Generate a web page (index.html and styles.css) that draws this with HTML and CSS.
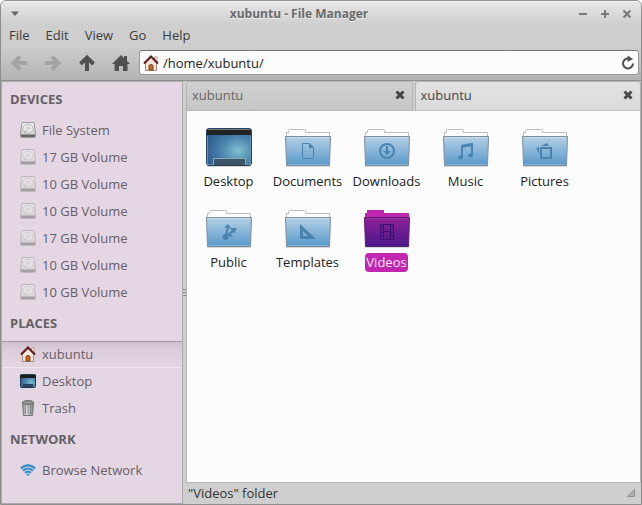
FILE: index.html
```html
<!DOCTYPE html>
<html lang="en">
<head>
    <meta charset="UTF-8">
    <meta name="viewport" content="width=device-width, initial-scale=1.0">
    <title>xubuntu - File Manager</title>
    <link rel="stylesheet" href="styles.css">
</head>
<body>
    <svg class="sprite" width="0" height="0" aria-hidden="true">
        <defs>
            <linearGradient id="blue" x1="0" y1="0" x2="0" y2="1">
                <stop offset="0" stop-color="#b3cfe5"/>
                <stop offset="0.5" stop-color="#87b5d9"/>
                <stop offset="1" stop-color="#5a99c8"/>
            </linearGradient>
            <linearGradient id="purple" x1="0" y1="0" x2="0" y2="1">
                <stop offset="0" stop-color="#90219b"/>
                <stop offset="1" stop-color="#4a1889"/>
            </linearGradient>
            <radialGradient id="screen" cx="0.7" cy="0.6" r="0.75">
                <stop offset="0" stop-color="#7fc0cf"/>
                <stop offset="0.5" stop-color="#4a82ad"/>
                <stop offset="1" stop-color="#2d5a91"/>
            </radialGradient>
            <linearGradient id="metal" x1="0" y1="0" x2="0" y2="1">
                <stop offset="0" stop-color="#f4f4f4"/>
                <stop offset="1" stop-color="#c4c4c4"/>
            </linearGradient>
            <linearGradient id="can" x1="0" y1="0" x2="1" y2="0">
                <stop offset="0" stop-color="#85888a"/>
                <stop offset="0.4" stop-color="#e4e4e4"/>
                <stop offset="1" stop-color="#76797b"/>
            </linearGradient>
        </defs>
        <symbol id="folder" viewBox="0 0 48 40">
            <rect x="2" y="37" width="44" height="2" rx="1" fill="#000" opacity="0.15"/>
            <path d="M2.5 10.500V4.500H4.500V2.500Q4.500 1.500 5.500 1.500H20.500Q21.500 1.500 21.500 2.500V4.500H45.500V10.500Z" fill="#fcfcfc" stroke="#bcbcbc"/>
            <path d="M1.500 8.500H46.500L45.500 37.500H2.500Z" fill="url(#blue)" stroke="#7c8e9c"/>
            <path d="M3 9.500H45" stroke="#c8dfef"/>
            <path d="M3.500 36.500H44.500" stroke="#7fb2d8"/>
        </symbol>
        <symbol id="folder-selected" viewBox="0 0 48 40">
            <rect x="2" y="37" width="44" height="2" rx="1" fill="#000" opacity="0.15"/>
            <path d="M2.500 10.500V4.500H4.500V1.500H20.500V4.500H45.500V10.500Z" fill="#c127ae" stroke="#b423a5"/>
            <path d="M1.500 8.500H46.500L45.500 37.500H2.500Z" fill="url(#purple)" stroke="#5d1b74"/>
            <path d="M3 9.500H45" stroke="#9a2fa8"/>
        </symbol>
        <symbol id="drive" viewBox="0 0 16 16">
            <path d="M2 .5H14L15.500 11V14.500Q15.500 15.500 14.500 15.500H1.500Q.5 15.500 .5 14.500V11Z" fill="url(#metal)" stroke="#9a9a9a"/>
            <path d="M1 12.500H15V14.500Q15 15 14 15H2Q1 15 1 14.500Z" fill="#666"/>
            <ellipse cx="8" cy="6.500" rx="5" ry="4.500" fill="#e8e8e8" stroke="#bdbdbd"/>
            <circle cx="8" cy="6" r="1" fill="#fff" stroke="#bbb"/>
            <path d="M4 11L7 8" stroke="#aaa"/>
        </symbol>
        <symbol id="house" viewBox="0 0 16 16">
            <path d="M11.500 2H14V7H11.500Z" fill="#f7efe6" stroke="#b79a83"/>
            <path d="M2.500 8L8 2.500L13.500 8V15.500H2.500Z" fill="#f6e7dc" stroke="#a08a7b"/>
            <path d="M6 15V11Q6 9.500 8 9.500Q10 9.500 10 11V15Z" fill="#c66a28" stroke="#84401b"/>
            <path d="M1 8.500L8 1.500L15 8.500" fill="none" stroke="#5c1c20" stroke-width="2"/>
        </symbol>
        <symbol id="desktop" viewBox="0 0 48 40">
            <rect x="2" y="36" width="44" height="3" rx="1" fill="#000" opacity="0.15"/>
            <rect x="1.500" y=".5" width="45" height="37" rx="2.500" fill="url(#screen)" stroke="#26435f"/>
            <path d="M2 7V3Q2 1 4 1H44Q46 1 46 3V7Z" fill="#222"/>
            <path d="M3 1.500H45" stroke="#777"/>
            <path d="M2.500 8V36.500H8M40 36.500H45.500V8" fill="none" stroke="#6590b7"/>
            <rect x="8.500" y="30.500" width="32" height="7" fill="#3c5468" stroke="#85a8bd"/>
            <path d="M4 37.500H44" stroke="#263a4c"/>
        </symbol>
        <symbol id="cross" viewBox="0 0 10 10">
            <path d="M1.500 1.500L8.500 8.500M8.500 1.500L1.500 8.500" stroke="#484848" stroke-width="3"/>
        </symbol>
    </svg>

    <div class="window">
        <header class="titlebar">
            <button class="wm" aria-label="Window menu"><svg width="10" height="6"><path d="M1 .5H9L5 5Z" fill="#666"/></svg></button>
            <h1>xubuntu - File Manager</h1>
            <div class="wm-buttons">
                <button class="wm" aria-label="Minimize"><svg width="10" height="10"><path d="M1 5H9" stroke="#777" stroke-width="2"/></svg></button>
                <button class="wm" aria-label="Maximize"><svg width="10" height="10"><path d="M1 5H9M5 1V9" stroke="#777" stroke-width="2"/></svg></button>
                <button class="wm" aria-label="Close"><svg width="10" height="10"><path d="M1.500 1.500L8.500 8.500M8.500 1.500L1.500 8.500" stroke="#777" stroke-width="2"/></svg></button>
            </div>
        </header>

        <nav class="menubar">
            <button>File</button>
            <button>Edit</button>
            <button>View</button>
            <button>Go</button>
            <button>Help</button>
        </nav>

        <div class="toolbar">
            <button class="tool" aria-label="Back" disabled><svg width="18" height="18"><path d="M17 9H4M10 2.500L3.500 9L10 15.500" fill="none" stroke="#a3a3a3" stroke-width="4"/></svg></button>
            <button class="tool" aria-label="Forward" disabled><svg width="18" height="18"><path d="M1 9H14M8 2.500L14.500 9L8 15.500" fill="none" stroke="#a3a3a3" stroke-width="4"/></svg></button>
            <button class="tool" aria-label="Up"><svg width="18" height="18"><path d="M9 17V4M2.500 10L9 3.500L15.500 10" fill="none" stroke="#505050" stroke-width="4"/></svg></button>
            <button class="tool" aria-label="Home"><svg width="18" height="18"><path d="M9 1L12 4V2H15V7L18 10H15.500V17H11V12H7V17H2.500V10H0Z" fill="#505050"/></svg></button>
            <div class="location">
                <svg width="16" height="16"><use href="#house"/></svg>
                <input type="text" value="/home/xubuntu/" aria-label="Location">
                <button aria-label="Reload"><svg width="14" height="16"><path d="M8 3.500A5 5 0 1 0 12 8.500" fill="none" stroke="#505050" stroke-width="2"/><path d="M6.500 .5L12 4L6.500 7Z" fill="#505050"/></svg></button>
            </div>
        </div>

        <div class="main">
            <aside class="sidebar">
                <h2>DEVICES</h2>
                <a href="#"><svg width="16" height="16"><use href="#drive"/></svg>File System</a>
                <a href="#" class="unmounted"><svg width="16" height="16"><use href="#drive"/></svg>17 GB Volume</a>
                <a href="#" class="unmounted"><svg width="16" height="16"><use href="#drive"/></svg>10 GB Volume</a>
                <a href="#" class="unmounted"><svg width="16" height="16"><use href="#drive"/></svg>10 GB Volume</a>
                <a href="#" class="unmounted"><svg width="16" height="16"><use href="#drive"/></svg>17 GB Volume</a>
                <a href="#" class="unmounted"><svg width="16" height="16"><use href="#drive"/></svg>10 GB Volume</a>
                <a href="#" class="unmounted"><svg width="16" height="16"><use href="#drive"/></svg>10 GB Volume</a>
                <h2>PLACES</h2>
                <a href="#" class="current"><svg width="16" height="16"><use href="#house"/></svg>xubuntu</a>
                <a href="#"><svg width="16" height="16">
                    <rect x=".5" y="1.500" width="15" height="13" rx="1" fill="url(#screen)" stroke="#22394f"/>
                    <path d="M0 2H16V5H0Z" fill="#1c1c1c"/>
                    <path d="M3 11H13V14H3Z" fill="#29455e"/>
                </svg>Desktop</a>
                <a href="#"><svg width="16" height="16">
                    <path d="M2.500 2.500H13.500L12.500 15.500H3.500Z" fill="url(#can)" stroke="#777"/>
                    <path d="M5.500 5V14M8 5V14M10.500 5V14" stroke="#8a8a8a"/>
                    <ellipse cx="8" cy="2.500" rx="5.500" ry="2" fill="#8f9294" stroke="#6f6f6f"/>
                </svg>Trash</a>
                <h2>NETWORK</h2>
                <a href="#"><svg width="16" height="16">
                    <path d="M0 5.500Q8 -1.500 16 5.500L8 14Z" fill="#3c8ac8"/>
                    <path d="M2 7.500Q8 2.500 14 7.500M4 10Q8 6 12 10M6 12Q8 10 10 12" fill="none" stroke="#c9dbea"/>
                </svg>Browse Network</a>
            </aside>

            <div class="splitter"><i></i><i></i><i></i></div>

            <div class="content">
                <div class="tabs">
                    <div class="tab">
                        <button class="tab-label">xubuntu</button>
                        <button aria-label="Close tab"><svg width="10" height="10"><use href="#cross"/></svg></button>
                    </div>
                    <div class="tab active">
                        <button class="tab-label">xubuntu</button>
                        <button aria-label="Close tab"><svg width="10" height="10"><use href="#cross"/></svg></button>
                    </div>
                </div>

                <div class="files">
                    <a href="#"><svg width="48" height="40"><use href="#desktop"/></svg><span>Desktop</span></a>
                    <a href="#"><svg width="48" height="40"><use href="#folder"/>
                        <path d="M18.500 15.500H25.500L29.500 19.500V30.500H18.500Z" fill="none" stroke="#4a83ad"/>
                        <path d="M25 15V20H30Z" fill="#4a83ad"/>
                    </svg><span>Documents</span></a>
                    <a href="#"><svg width="48" height="40"><use href="#folder"/>
                        <circle cx="24" cy="23" r="7" fill="none" stroke="#4a83ad" stroke-width="2"/>
                        <path d="M23 18H25V23H28L24 27L20 23H23Z" fill="#4a83ad"/>
                    </svg><span>Downloads</span></a>
                    <a href="#"><svg width="48" height="40"><use href="#folder"/>
                        <path d="M20 29V18L30 16V27" fill="none" stroke="#4a83ad" stroke-width="2"/>
                        <path d="M19 17L31 15V18L19 20Z" fill="#4a83ad"/>
                        <ellipse cx="18.500" cy="29.500" rx="2.500" ry="2" fill="#4a83ad"/>
                        <ellipse cx="28.500" cy="27.500" rx="2.500" ry="2" fill="#4a83ad"/>
                    </svg><span>Music</span></a>
                    <a href="#"><svg width="48" height="40"><use href="#folder"/>
                        <rect x="20" y="20" width="10" height="10" fill="none" stroke="#4a83ad" stroke-width="2"/>
                        <path d="M20 18L26 15L28 18ZM15 20L18 19V26Z" fill="#4a83ad"/>
                    </svg><span>Pictures</span></a>
                    <a href="#"><svg width="48" height="40"><use href="#folder"/>
                        <circle cx="20.500" cy="28" r="3" fill="#4a83ad"/>
                        <path d="M20.500 28L23 18M20.500 28L29 21" stroke="#4a83ad" stroke-width="2"/>
                        <path d="M19 18.500L23 15L26 19ZM25 19H32L29 24.500ZM24 23L28 27L24 28Z" fill="#4a83ad"/>
                    </svg><span>Public</span></a>
                    <a href="#"><svg width="48" height="40"><use href="#folder"/>
                        <path d="M16 15V30H32ZM19 22L24 27H19Z" fill="#4a83ad" fill-rule="evenodd"/>
                    </svg><span>Templates</span></a>
                    <a href="#" class="selected"><svg width="48" height="40"><use href="#folder-selected"/>
                        <g fill="none" stroke="#3c1173">
                            <path d="M17.500 15.500H30.500V30.500H17.500ZM20.500 15.500V30.500M27.500 15.500V30.500M20.500 22.500H27.500"/>
                            <path d="M18 17.500H20M18 20.500H20M18 23.500H20M18 26.500H20M28 17.500H30M28 20.500H30M28 23.500H30M28 26.500H30"/>
                        </g>
                    </svg><span>Videos</span></a>
                </div>

                <footer class="statusbar">
                    <span>"Videos" folder</span>
                    <svg width="8" height="8"><path d="M7.500 .5V7.500H.5Z" fill="#b0b0b0" stroke="#8e8e8e"/></svg>
                </footer>
            </div>
        </div>
    </div>
</body>
</html>
```

FILE: styles.css
```css
* {
    box-sizing: border-box;
}

body {
    margin: 0;
    font-family: "Open Sans", "Noto Sans", sans-serif;
    font-size: 13px;
    line-height: 18px;
    color: #3c3c3c;
    background: #fff;
}

button {
    padding: 0;
    border: none;
    background: none;
    font: inherit;
    color: inherit;
}

svg {
    display: block;
    flex: none;
}

a {
    color: inherit;
    text-decoration: none;
}

.sprite {
    position: absolute;
}

.window {
    display: flex;
    flex-direction: column;
    min-height: 100vh;
    border: 1px solid #8e8e8e;
    border-radius: 6px 6px 0 0;
    background: #cecece;
    overflow: hidden;
}

.titlebar {
    display: flex;
    align-items: center;
    height: 24px;
    padding: 0 5px 0 9px;
    border-top: 1px solid #f4f4f4;
    background: linear-gradient(#e6e6e6, #cecece);
}

.titlebar h1 {
    flex: 1;
    margin: 0;
    font-size: 12px;
    text-align: center;
    color: #6a6a6a;
    text-shadow: 0 1px #eee;
}

.wm-buttons {
    display: flex;
    gap: 12px;
    padding-right: 4px;
}

.menubar {
    display: flex;
    gap: 16px;
    height: 20px;
    padding: 0 8px;
}

.toolbar {
    display: flex;
    align-items: center;
    gap: 16px;
    height: 36px;
    padding: 0 2px 0 9px;
    border-bottom: 1px solid #8e8e8e;
    background: linear-gradient(#cecece, #b3b3b3);
}

.location {
    flex: 1;
    display: flex;
    align-items: center;
    gap: 4px;
    height: 25px;
    margin-left: -7px;
    padding: 0 3px;
    border: 1px solid #999;
    border-top-color: #777;
    border-radius: 3px;
    background: #fcfcfc;
}

.location input {
    flex: 1;
    min-width: 0;
    padding: 0;
    border: none;
    background: none;
    font: inherit;
    color: #222;
    outline: none;
}

.main {
    flex: 1;
    display: flex;
}

.sidebar {
    flex: none;
    width: 182px;
    border: 1px solid #ababab;
    background: #e4d6e3;
    color: #676067;
}

.sidebar h2 {
    margin: 0;
    padding: 0 8px;
    font-size: 13px;
    line-height: 35px;
    color: #656065;
}

.sidebar a {
    display: flex;
    align-items: center;
    gap: 6px;
    height: 27px;
    padding-left: 18px;
    padding-bottom: 1px;
}

.sidebar .unmounted svg {
    opacity: 0.5;
}

.sidebar .current {
    border-top: 1px solid #a599a5;
    border-bottom: 1px solid #f0e6ef;
    background: linear-gradient(#cdbfcc, #dbcdda 30%, #e2d4e1);
}

.splitter {
    flex: none;
    display: flex;
    flex-direction: column;
    justify-content: center;
    gap: 2px;
    width: 3px;
}

.splitter i {
    height: 1px;
    background: #888;
}

.content {
    flex: 1;
    display: flex;
    flex-direction: column;
    min-width: 0;
}

.tabs {
    display: flex;
    gap: 2px;
    height: 30px;
}

.tab {
    flex: 1;
    display: flex;
    align-items: center;
    padding: 0 7px 2px 5px;
    border: 1px solid #b4b4b4;
    border-radius: 3px 3px 0 0;
    background: linear-gradient(#d0d0d0, #c6c6c6);
    color: #666;
}

.tab.active {
    border-bottom-color: #c4c4c4;
    background: linear-gradient(#e2e2e2, #dadada);
    color: #444;
}

.tab-label {
    flex: 1;
    text-align: left;
}

.files {
    flex: 1;
    display: grid;
    grid-template-columns: repeat(auto-fill, 79px);
    align-content: start;
    row-gap: 18px;
    padding: 17px 2px;
    border: 1px solid #b4b4b4;
    border-top: none;
    background: #fcfcfc;
    color: #222;
}

.files a {
    display: flex;
    flex-direction: column;
    align-items: center;
    gap: 4px;
}

.files span {
    padding: 0 1px;
    line-height: 19px;
    border-radius: 4px;
}

.files .selected span {
    background: #c127ae;
    color: #f4e4f2;
}

.statusbar {
    display: flex;
    align-items: center;
    justify-content: space-between;
    height: 21px;
    padding: 0 6px 1px 2px;
    color: #333;
}
```
